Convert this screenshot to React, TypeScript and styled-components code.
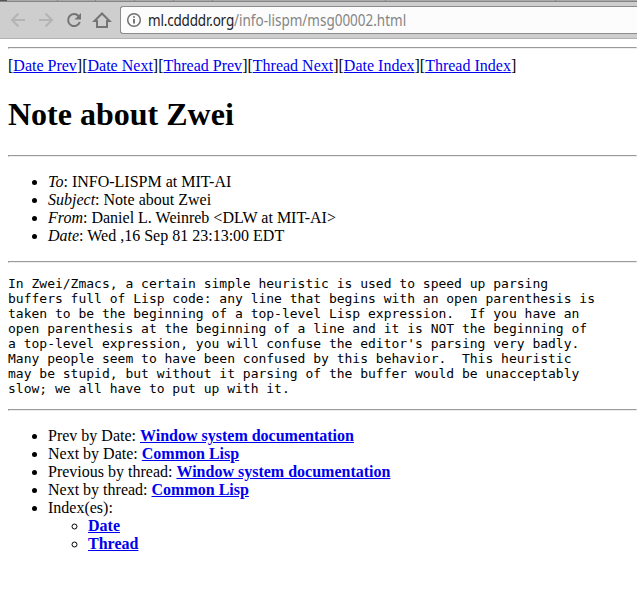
import React from "react";
import styled, { createGlobalStyle } from "styled-components";

const GlobalStyle = createGlobalStyle`
  body { margin: 0; background: #fff; color: #000; overflow: hidden; }
`;

const Window = styled.div`
  width: 637px;
  height: 602px;
  overflow: hidden;
  background: #fff;
`;

const TabEdge = styled.div`
  height: 2px;
  box-sizing: border-box;
  display: flex;
  background: #aaa;
  border-bottom: 1px solid #858585;
`;

const TabCorner = styled.span`
  width: 7px;
  flex: none;
  background: #555;
`;

const TabSegment = styled.span<{ $width: number }>`
  width: ${(p) => p.$width}px;
  box-sizing: border-box;
  flex: none;
  border-right: 1px solid #858585;
`;

const Toolbar = styled.header`
  height: 37px;
  box-sizing: border-box;
  display: flex;
  align-items: flex-start;
  padding: 4px 0 0 8px;
  background: #cecece;
  border-bottom: 1px solid #b2b2b2;
`;

const NavButton = styled.span<{ $disabled?: boolean }>`
  width: 28px;
  height: 20px;
  margin-top: 4px;
  flex: none;
  color: ${(p) => (p.$disabled ? "#b4b4b4" : "#747474")};
  svg { display: block; }
`;

const AddressBar = styled.div`
  flex: 1;
  height: 28px;
  box-sizing: border-box;
  display: flex;
  align-items: center;
  gap: 6px;
  padding-left: 5px;
  background: #fcfcfc;
  border: 1px solid #8c8c8c;
  border-right: 0;
  border-radius: 3px 0 0 3px;
  font: 15.500px/20px "Noto Sans", sans-serif;
  color: #858585;
`;

const Url = styled.span`
  display: inline-block;
  flex: none;
  transform: scaleX(0.87);
  transform-origin: left center;
  white-space: nowrap;
`;

const Host = styled.span`
  color: #222;
  letter-spacing: -0.200px;
`;

const Page = styled.main`
  margin-left: 8px;
  font: 16px/18px "Liberation Serif", serif;
`;

const Rule = styled.hr`
  margin: 8px 0;
`;

const Title = styled.h1`
  margin: 21px 0 22px;
  font-size: 32px;
  line-height: 37px;
`;

const List = styled.ul`
  margin: 16px 0;
  padding-left: 40px;
  ul { margin: 0; }
`;

const Link = styled.a<{ $strong?: boolean }>`
  color: #0000ee;
  text-decoration: underline;
  font-weight: ${(p) => (p.$strong ? "bold" : "normal")};
`;

const Message = styled.pre`
  margin: 13px 0;
  font: 13px/15px "DejaVu Sans Mono", monospace;
`;

const tabWidths = [51, 38, 39, 39, 39, 173, 170];
const nav = ["Date Prev", "Date Next", "Thread Prev", "Thread Next", "Date Index", "Thread Index"];
const headers = [
  ["To", "INFO-LISPM at MIT-AI"],
  ["Subject", "Note about Zwei"],
  ["From", "Daniel L. Weinreb <DLW at MIT-AI>"],
  ["Date", "Wed ,16 Sep 81 23:13:00 EDT"],
];
const related = [
  ["Prev by Date", "Window system documentation"],
  ["Next by Date", "Common Lisp"],
  ["Previous by thread", "Window system documentation"],
  ["Next by thread", "Common Lisp"],
];
const message = `In Zwei/Zmacs, a certain simple heuristic is used to speed up parsing
buffers full of Lisp code: any line that begins with an open parenthesis is
taken to be the beginning of a top-level Lisp expression.  If you have an
open parenthesis at the beginning of a line and it is NOT the beginning of
a top-level expression, you will confuse the editor's parsing very badly.
Many people seem to have been confused by this behavior.  This heuristic
may be stupid, but without it parsing of the buffer would be unacceptably
slow; we all have to put up with it.`;

export default function App() {
  return (
    <Window>
      <GlobalStyle />
      <TabEdge>
        <TabCorner />
        {tabWidths.map((w, i) => <TabSegment key={i} $width={w} />)}
      </TabEdge>
      <Toolbar>
        <NavButton $disabled>
          <svg width="20" height="20" viewBox="0 0 20 20" fill="none" stroke="currentColor" strokeWidth="2"><path d="M17 10H4M10.500 3.500L4 10l6.500 6.500" /></svg>
        </NavButton>
        <NavButton $disabled>
          <svg width="20" height="20" viewBox="0 0 20 20" fill="none" stroke="currentColor" strokeWidth="2"><path d="M3 10h13M9.500 3.500L16 10l-6.500 6.500" /></svg>
        </NavButton>
        <NavButton>
          <svg width="20" height="20" viewBox="0 0 20 20" fill="none" stroke="currentColor" strokeWidth="2"><path d="M14.500 6A6 6 0 1 0 15.800 12" /><path d="M17 3v6.500h-6.500z" fill="currentColor" stroke="none" /></svg>
        </NavButton>
        <NavButton>
          <svg width="20" height="20" viewBox="0 0 20 20" fill="none" stroke="currentColor" strokeWidth="2"><path d="M2.500 11L10 3.500l7.500 7.500H15v6H5v-6z" /></svg>
        </NavButton>
        <AddressBar>
          <svg width="16" height="16" viewBox="0 0 16 16" fill="none" stroke="#707070" strokeWidth="1.500"><circle cx="8" cy="8" r="6.300" /><path d="M8 7v4.500M8 4.300v1.500" strokeWidth="1.900" /></svg>
          <Url><Host>ml.cddddr.org</Host>/info-lispm/msg00002.html</Url>
        </AddressBar>
      </Toolbar>
      <Page>
        <Rule />
        <nav>{nav.map((n) => <React.Fragment key={n}>[<Link>{n}</Link>]</React.Fragment>)}</nav>
        <Title>Note about Zwei</Title>
        <Rule />
        <List>{headers.map(([k, v]) => <li key={k}><em>{k}</em>: {v}</li>)}</List>
        <Rule />
        <Message>{message}</Message>
        <Rule />
        <List>
          {related.map(([k, v]) => <li key={k}>{k}: <Link $strong>{v}</Link></li>)}
          <li>Index(es):
            <List>
              <li><Link $strong>Date</Link></li>
              <li><Link $strong>Thread</Link></li>
            </List>
          </li>
        </List>
      </Page>
    </Window>
  );
}
